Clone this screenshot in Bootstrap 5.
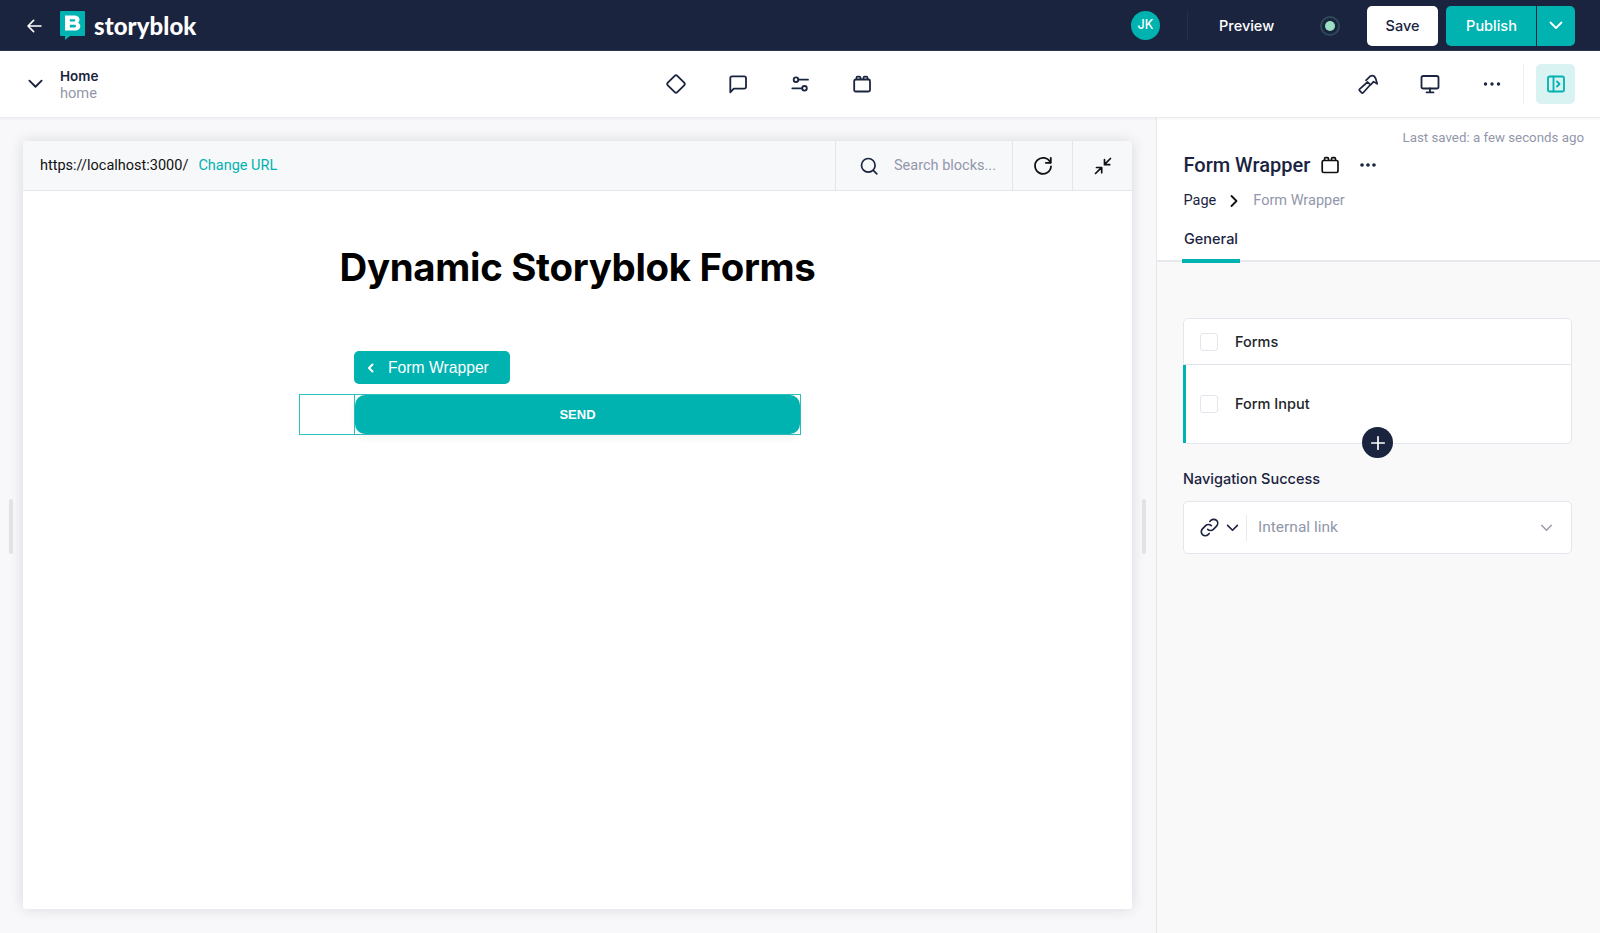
<!DOCTYPE html>
<html lang="en">
<head>
<meta charset="utf-8">
<title>Storyblok</title>
<link href="https://cdn.jsdelivr.net/npm/bootstrap@5.3.0/dist/css/bootstrap.min.css" rel="stylesheet">
<style>
html,body{height:100%;overflow:hidden}
body{font-family:Inter,"Liberation Sans",sans-serif;color:#1b243f;background:#fff;font-size:14px}
svg{display:block;flex:none}
.top{height:51px;background:#1b243f;padding:1px 25px 0 27px;border-bottom:1px solid #2b3552}
.brand{font-family:Lato,Inter,sans-serif;font-weight:900;font-size:23.9px;color:#fff;letter-spacing:.1px;line-height:1;margin-left:9px}
.logo-wrap{margin-left:18px}
.avatar{width:29px;height:29px;background:#00b3b0;color:#fff;font-size:12.5px;font-weight:500}
.vline{width:1px;height:28px;background:#262f4b;margin:0 31px 0 27px}
.preview{color:#fff;font-size:14.5px;font-weight:500;width:55px}
.dot{width:20px;height:20px;border:2px solid #2c4a57;margin:0 27px 0 46px}
.dot i{display:block;width:10px;height:10px;border-radius:50%;background:#9adfc3}
.btn.save{background:#fff;color:#1b243f;width:71px;height:40px;border-radius:5px;font-size:14.5px;font-weight:500;padding:0}
.btn.pub{background:#00b3b0;color:#fff;height:40px;width:91px;font-size:14.5px;font-weight:500;padding:0;border:0;border-radius:5px 0 0 5px}
.btn.pubc{background:#00b3b0;height:40px;width:39px;padding:0;border:0;border-left:1px solid #1b243f;border-radius:0 5px 5px 0}
.pubgrp{margin-left:8px}
.sub{height:67px;padding:0 25px 0 27px;background:#fff;border-bottom:1px solid #e9ebef;box-shadow:0 1px 2px rgba(27,36,63,.05);position:relative;z-index:2}
.story{width:637px;gap:16px}
.story b{display:block;font-size:13.5px;font-weight:600;line-height:16px;padding-top:1px}
.story span{display:block;font-family:Roboto,sans-serif;font-size:14.6px;color:#9297aa;line-height:18px}
.tools{gap:38px}
.sub-right{gap:38px}
.sub-sep{width:1px;height:40px;background:#eceef1;margin:0 12px 0 -19px}
.toggle{width:39px;height:40px;background:#d9f3f2;border-radius:5px}
.main{height:815px}
.stage{width:1156px;padding:23px 24px 24px 23px;background:#f8f8fa;position:relative}
.frame{height:768px;border:0;border-radius:4px;box-shadow:0 0 14px rgba(27,36,63,.14);overflow:hidden}
.urlbar{height:50px;background:#f7f8fa;border-bottom:1px solid #e3e6ec;font-family:Roboto,sans-serif;font-size:14.5px}
.url{color:#111;padding-left:17px;width:812px;gap:10px}
.url a{color:#00b3b0;text-decoration:none}
.search{width:177px;border-left:1px solid #e3e6ec;height:100%;padding-left:23px;gap:15px;color:#9297aa;font-size:14.5px}
.cell{width:60px;height:100%;border-left:1px solid #e3e6ec}
.frame-body{background:#fff}
.frame-body h1{font-size:38.4px;font-weight:700;color:#000;letter-spacing:-.3px;line-height:48px;text-align:center;margin:52px 0 60px}
.tag-row{padding-left:331px;height:33px}
.tag{width:156px;height:33px;background:#00b3b0;color:#fff;border-radius:5px;font-family:"Liberation Sans",sans-serif;font-size:15.7px;padding-left:13px;gap:13px}
.sel-row{padding-left:276px;margin-top:10px}
.sel{width:502px;height:41px;border:1px solid #2fc0bd;padding-left:54px;background:#fff}
.send-wrap{height:100%;border-left:1px solid #2fc0bd}
.send{background:#00b3b0;color:#fff;border:0;border-radius:10px;width:100%;height:100%;font-family:"Liberation Sans",sans-serif;font-size:13px;font-weight:700;padding:1px 0 0;box-shadow:0 4px 8px rgba(27,36,63,.06)}
.handle{position:absolute;top:381px;width:4px;height:55px;background:#e1e2e5;border-radius:2px}
.h-l{left:9px}.h-r{left:1142px}
.panel{width:444px;background:#f9f9fa;border-left:1px solid #e5e7ec;flex:none}
.panel-head{background:#fff;height:144px;border-bottom:2px solid #e7e8eb;position:relative;padding:0 0 0 26.500px}
.saved{font-family:Roboto,sans-serif;font-size:13.300px;color:#9297aa;text-align:right;padding:12px 16px 0 0;line-height:15px;height:27px}
.ptitle{gap:10.500px;height:32px;margin-top:4px;font-family:Roboto,sans-serif;font-size:20px;font-weight:500;line-height:1}
.crumb{gap:13px;margin-top:10px;height:20px;font-family:Roboto,sans-serif;font-size:14.5px}
.crumb .m{color:#9297aa;margin-left:1px}
.nav-tabs.ptabs{border:0;margin:18px 0 0 -1.500px}
.nav-tabs.ptabs .nav-link{border:0;border-bottom:4px solid #00b3b0;background:transparent;color:#1b243f;font-size:14.5px;font-weight:500;padding:0 2px;height:34px;width:58px;border-radius:0;line-height:20px;margin:0}
.panel-body{padding:56px 28px 0 26px}
.blocks{position:relative;height:126px;border:1px solid #e3e6ec;border-radius:5px;background:#fff;font-size:14.5px;font-weight:500;color:#111;margin-bottom:26px}
.blocks .list-group-item{display:flex;align-items:center;gap:17px;padding:0 0 0 16px;border:0;background:#fff}
.blocks .b1{height:46px;border-bottom:1px solid #e0e4ea;border-radius:5px 5px 0 0}
.blocks .b2{height:78px;border-left:3px solid #00b3b0;margin-left:-1px;padding-left:14px;border-radius:0 0 5px 0}
.check{width:18px;height:18px;border:1px solid #e3e6ec;border-radius:3px;background:#fff;flex:none}
.plus{position:absolute;left:178px;bottom:-15px;width:31px;height:31px;background:#1b243f;z-index:2}
.flabel{font-size:14.5px;font-weight:500;line-height:18px;margin-bottom:13px}
.linkbox{height:53px;border:1px solid #e3e6ec;border-radius:5px;background:#fff;padding:0 18px 0 15px;color:#9297aa;font-family:Roboto,sans-serif;font-size:15.5px}
.linkbox .link-ico{margin-right:6px}
.linkbox .sep{width:1px;height:26px;background:#e8eaee;margin:0 11px 0 7px}
</style>
</head>
<body>
<nav class="navbar top d-flex flex-nowrap align-items-center">
  <div class="d-flex align-items-center">
    <svg width="15" height="14" viewBox="0 0 15 14" fill="none" stroke="#fff" stroke-width="1.6" stroke-linecap="round" stroke-linejoin="round"><path d="M14 7H1.2M6.6 1.4 1 7l5.6 5.6"/></svg>
    <div class="logo-wrap">
      <svg width="25" height="29" viewBox="0 0 25 29"><path d="M1 0h23a1 1 0 0 1 1 1v23a1 1 0 0 1-1 1H10l-5 4v-4H1a1 1 0 0 1-1-1V1a1 1 0 0 1 1-1Z" fill="#00b3b0"/><path fill="#fff" fill-rule="evenodd" d="M5 4.500h9.500c3 0 5 1.700 5 4.200 0 1.400-.6 2.400-1.700 3.100 1.600.6 2.500 1.900 2.500 3.500 0 2.600-2 4.200-5 4.200H5ZM9.800 8.300v2.300h4.200c.8 0 1.300-.4 1.300-1.150s-.5-1.150-1.300-1.150Zm0 5.500v2.600h4.700c.9 0 1.500-.5 1.500-1.300s-.6-1.300-1.500-1.300Z"/></svg>
    </div>
    <span class="brand">storyblok</span>
  </div>
  <div class="d-flex align-items-center ms-auto">
    <div class="avatar rounded-circle d-flex align-items-center justify-content-center">JK</div>
    <div class="vline"></div>
    <div class="preview">Preview</div>
    <div class="dot rounded-circle d-flex align-items-center justify-content-center"><i></i></div>
    <button class="btn save d-flex align-items-center justify-content-center">Save</button>
    <div class="btn-group pubgrp">
      <button class="btn pub">Publish</button>
      <button class="btn pubc d-flex align-items-center justify-content-center"><svg width="14" height="9" viewBox="0 0 14 9" fill="none" stroke="#fff" stroke-width="1.8" stroke-linecap="round" stroke-linejoin="round"><path d="m1.500 1.500 5.500 5.500 5.500-5.500"/></svg></button>
    </div>
  </div>
</nav>

<div class="sub d-flex align-items-center">
  <div class="story d-flex align-items-center">
    <svg width="17" height="10" viewBox="0 0 14 9" fill="none" stroke="#1b243f" stroke-width="1.700" stroke-linecap="round" stroke-linejoin="round"><path d="m1.500 1.500 5.500 5.500 5.500-5.500"/></svg>
    <div><b>Home</b><span>home</span></div>
  </div>
  <div class="tools d-flex align-items-center">
    <svg width="24" height="24" viewBox="0 0 24 24" fill="none" stroke="#1b243f" stroke-width="1.800"><rect x="5.300" y="5.300" width="13.400" height="13.400" rx="1.800" transform="rotate(45 12 12)"/></svg>
    <svg width="24" height="24" viewBox="0 0 24 24" fill="none" stroke="#1b243f" stroke-width="1.800" stroke-linejoin="round"><path d="M4.300 20.300V6a1.700 1.700 0 0 1 1.700-1.700h12.300A1.700 1.700 0 0 1 20 6v9a1.700 1.700 0 0 1-1.700 1.700H7.700Z"/></svg>
    <svg width="24" height="24" viewBox="0 0 24 24" fill="none" stroke="#1b243f" stroke-width="1.800" stroke-linecap="round"><circle cx="8" cy="7.700" r="2.300"/><circle cx="16.500" cy="16.300" r="2.300"/><path d="M10.500 7.700H20M4.300 16.300h9.800"/></svg>
    <svg width="24" height="24" viewBox="0 0 24 24" fill="none" stroke="#1b243f" stroke-width="1.800" stroke-linejoin="round"><rect x="4.200" y="7.500" width="15.800" height="12" rx="1.500"/><path d="M6.500 7.500V5.800c0-.8.500-1.200 1.200-1.200h1.600c.7 0 1.200.4 1.200 1.200v1.700M13.500 7.500V5.800c0-.8.500-1.200 1.200-1.200h1.600c.7 0 1.200.4 1.200 1.200v1.700"/></svg>
  </div>
  <div class="sub-right d-flex align-items-center ms-auto">
    <svg width="24" height="24" viewBox="0 0 24 24" fill="none" stroke="#1b243f" stroke-width="1.700" stroke-linejoin="round" stroke-linecap="round"><path d="m5.600 20.700-2-2a1.100 1.100 0 0 1 0-1.600l8-7.100 2.700 2.700-7.100 8a1.100 1.100 0 0 1-1.600 0Z"/><path d="m10 8.400 4.300-4.300c2.300-.9 4.500.3 5.400 2.500l1.500 5.300-3.700-2.300-2.700 3.200"/></svg>
    <svg width="24" height="24" viewBox="0 0 24 24" fill="none" stroke="#1b243f" stroke-width="1.800" stroke-linecap="round" stroke-linejoin="round"><rect x="3.500" y="4" width="17" height="12.500" rx="1.800"/><path d="M12 16.500V20M8.500 20.300h7"/></svg>
    <svg width="24" height="24" viewBox="0 0 24 24" fill="#1b243f"><circle cx="5.500" cy="12" r="1.700"/><circle cx="12" cy="12" r="1.700"/><circle cx="18.500" cy="12" r="1.700"/></svg>
    <div class="sub-sep"></div>
  </div>
  <div class="toggle d-flex align-items-center justify-content-center">
    <svg width="24" height="24" viewBox="0 0 24 24" fill="none" stroke="#00b3b0" stroke-width="1.800" stroke-linecap="round" stroke-linejoin="round"><rect x="4" y="4.500" width="16" height="15" rx="1.800"/><path d="M9.500 4.500v15M13 9.500l2.500 2.500-2.500 2.500"/></svg>
  </div>
</div>

<div class="main d-flex">
  <section class="stage flex-grow-0">
    <div class="card frame">
      <div class="urlbar d-flex align-items-center">
        <div class="url d-flex align-items-center"><span>https://localhost:3000/</span><a href="#">Change URL</a></div>
        <div class="search d-flex align-items-center">
          <svg width="20" height="20" viewBox="0 0 20 20" fill="none" stroke="#1b243f" stroke-width="1.700" stroke-linecap="round"><circle cx="9.300" cy="9.300" r="6.800"/><path d="m14.300 14.300 3.500 3.500"/></svg>
          <span>Search blocks...</span>
        </div>
        <div class="cell d-flex align-items-center justify-content-center">
          <svg width="22" height="22" viewBox="0 0 22 22" fill="none" stroke="#111" stroke-width="1.800" stroke-linecap="round" stroke-linejoin="round"><path d="M18.300 7.500A8 8 0 1 0 19 11.500"/><path d="M18.800 2.800v5h-5"/></svg>
        </div>
        <div class="cell d-flex align-items-center justify-content-center">
          <svg width="20" height="20" viewBox="0 0 20 20" fill="none" stroke="#111" stroke-width="1.700" stroke-linecap="round" stroke-linejoin="round"><path d="M17.500 2.500 11.800 8.200M11.500 3.500v5.200h5.200M2.500 17.500l5.700-5.700M3.500 11.500h5.200v5.200"/></svg>
        </div>
      </div>
      <div class="frame-body flex-grow-1">
        <h1>Dynamic Storyblok Forms</h1>
        <div class="tag-row">
          <div class="tag d-flex align-items-center">
            <svg width="8" height="10" viewBox="0 0 8 10" fill="none" stroke="#fff" stroke-width="2" stroke-linecap="round" stroke-linejoin="round"><path d="M5.500 1.500 2 5l3.500 3.500"/></svg>
            <span>Form Wrapper</span>
          </div>
        </div>
        <div class="sel-row">
          <div class="sel"><div class="send-wrap"><button class="btn send">SEND</button></div></div>
        </div>
      </div>
    </div>
    <div class="handle h-l"></div>
    <div class="handle h-r"></div>
  </section>
  <aside class="panel d-flex flex-column">
    <div class="panel-head">
      <div class="saved">Last saved: a few seconds ago</div>
      <div class="ptitle d-flex align-items-center">
        <span>Form Wrapper</span>
        <svg width="18" height="18" viewBox="3 3 18 18" fill="none" stroke="#111" stroke-width="1.700" stroke-linejoin="round"><rect x="4.200" y="7.500" width="15.800" height="12" rx="1.500"/><path d="M6.500 7.500V5.800c0-.8.500-1.200 1.200-1.200h1.600c.7 0 1.200.4 1.200 1.200v1.700M13.500 7.500V5.800c0-.8.500-1.200 1.200-1.200h1.600c.7 0 1.200.4 1.200 1.200v1.700"/></svg>
        <svg class="ms-2" width="22" height="22" viewBox="0 0 24 24" fill="#1b243f"><circle cx="5.500" cy="12" r="2"/><circle cx="12" cy="12" r="2"/><circle cx="18.500" cy="12" r="2"/></svg>
      </div>
      <nav class="crumb d-flex align-items-center">
        <span>Page</span>
        <svg width="10" height="14" viewBox="0 0 10 14" fill="none" stroke="#111" stroke-width="1.800" stroke-linecap="round" stroke-linejoin="round"><path d="m2.500 2 5 5-5 5"/></svg>
        <span class="m">Form Wrapper</span>
      </nav>
      <ul class="nav nav-tabs ptabs"><li class="nav-item"><a class="nav-link active text-center" href="#">General</a></li></ul>
    </div>
    <div class="panel-body">
      <div class="list-group blocks">
        <div class="list-group-item b1"><span class="check"></span><span>Forms</span></div>
        <div class="list-group-item b2"><span class="check"></span><span>Form Input</span></div>
        <div class="plus rounded-circle d-flex align-items-center justify-content-center">
          <svg width="16" height="16" viewBox="0 0 16 16" fill="none" stroke="#fff" stroke-width="1.700" stroke-linecap="round"><path d="M8 1.800v12.400M1.800 8h12.400"/></svg>
        </div>
      </div>
      <div class="flabel">Navigation Success</div>
      <div class="linkbox d-flex align-items-center">
        <svg class="link-ico" width="21" height="21" viewBox="0 0 20 20" fill="none" stroke="#1b243f" stroke-width="1.600" stroke-linecap="round"><path d="M8.300 11.700a3.800 3.800 0 0 0 5.400 0l3-3a3.800 3.800 0 0 0-5.400-5.400l-1 1"/><path d="M11.700 8.300a3.800 3.800 0 0 0-5.400 0l-3 3a3.800 3.800 0 0 0 5.400 5.400l1-1"/></svg>
        <svg width="13" height="8" viewBox="0 0 14 9" fill="none" stroke="#1b243f" stroke-width="1.800" stroke-linecap="round" stroke-linejoin="round"><path d="m1.500 1.500 5.500 5.500 5.500-5.500"/></svg>
        <div class="sep"></div>
        <span>Internal link</span>
        <svg class="ms-auto" width="13" height="8" viewBox="0 0 14 9" fill="none" stroke="#9297aa" stroke-width="1.500" stroke-linecap="round" stroke-linejoin="round"><path d="m1.500 1.500 5.500 5.500 5.500-5.500"/></svg>
      </div>
    </div>
  </aside>
</div>
<script src="https://cdn.jsdelivr.net/npm/bootstrap@5.3.0/dist/js/bootstrap.bundle.min.js"></script>
</body>
</html>
